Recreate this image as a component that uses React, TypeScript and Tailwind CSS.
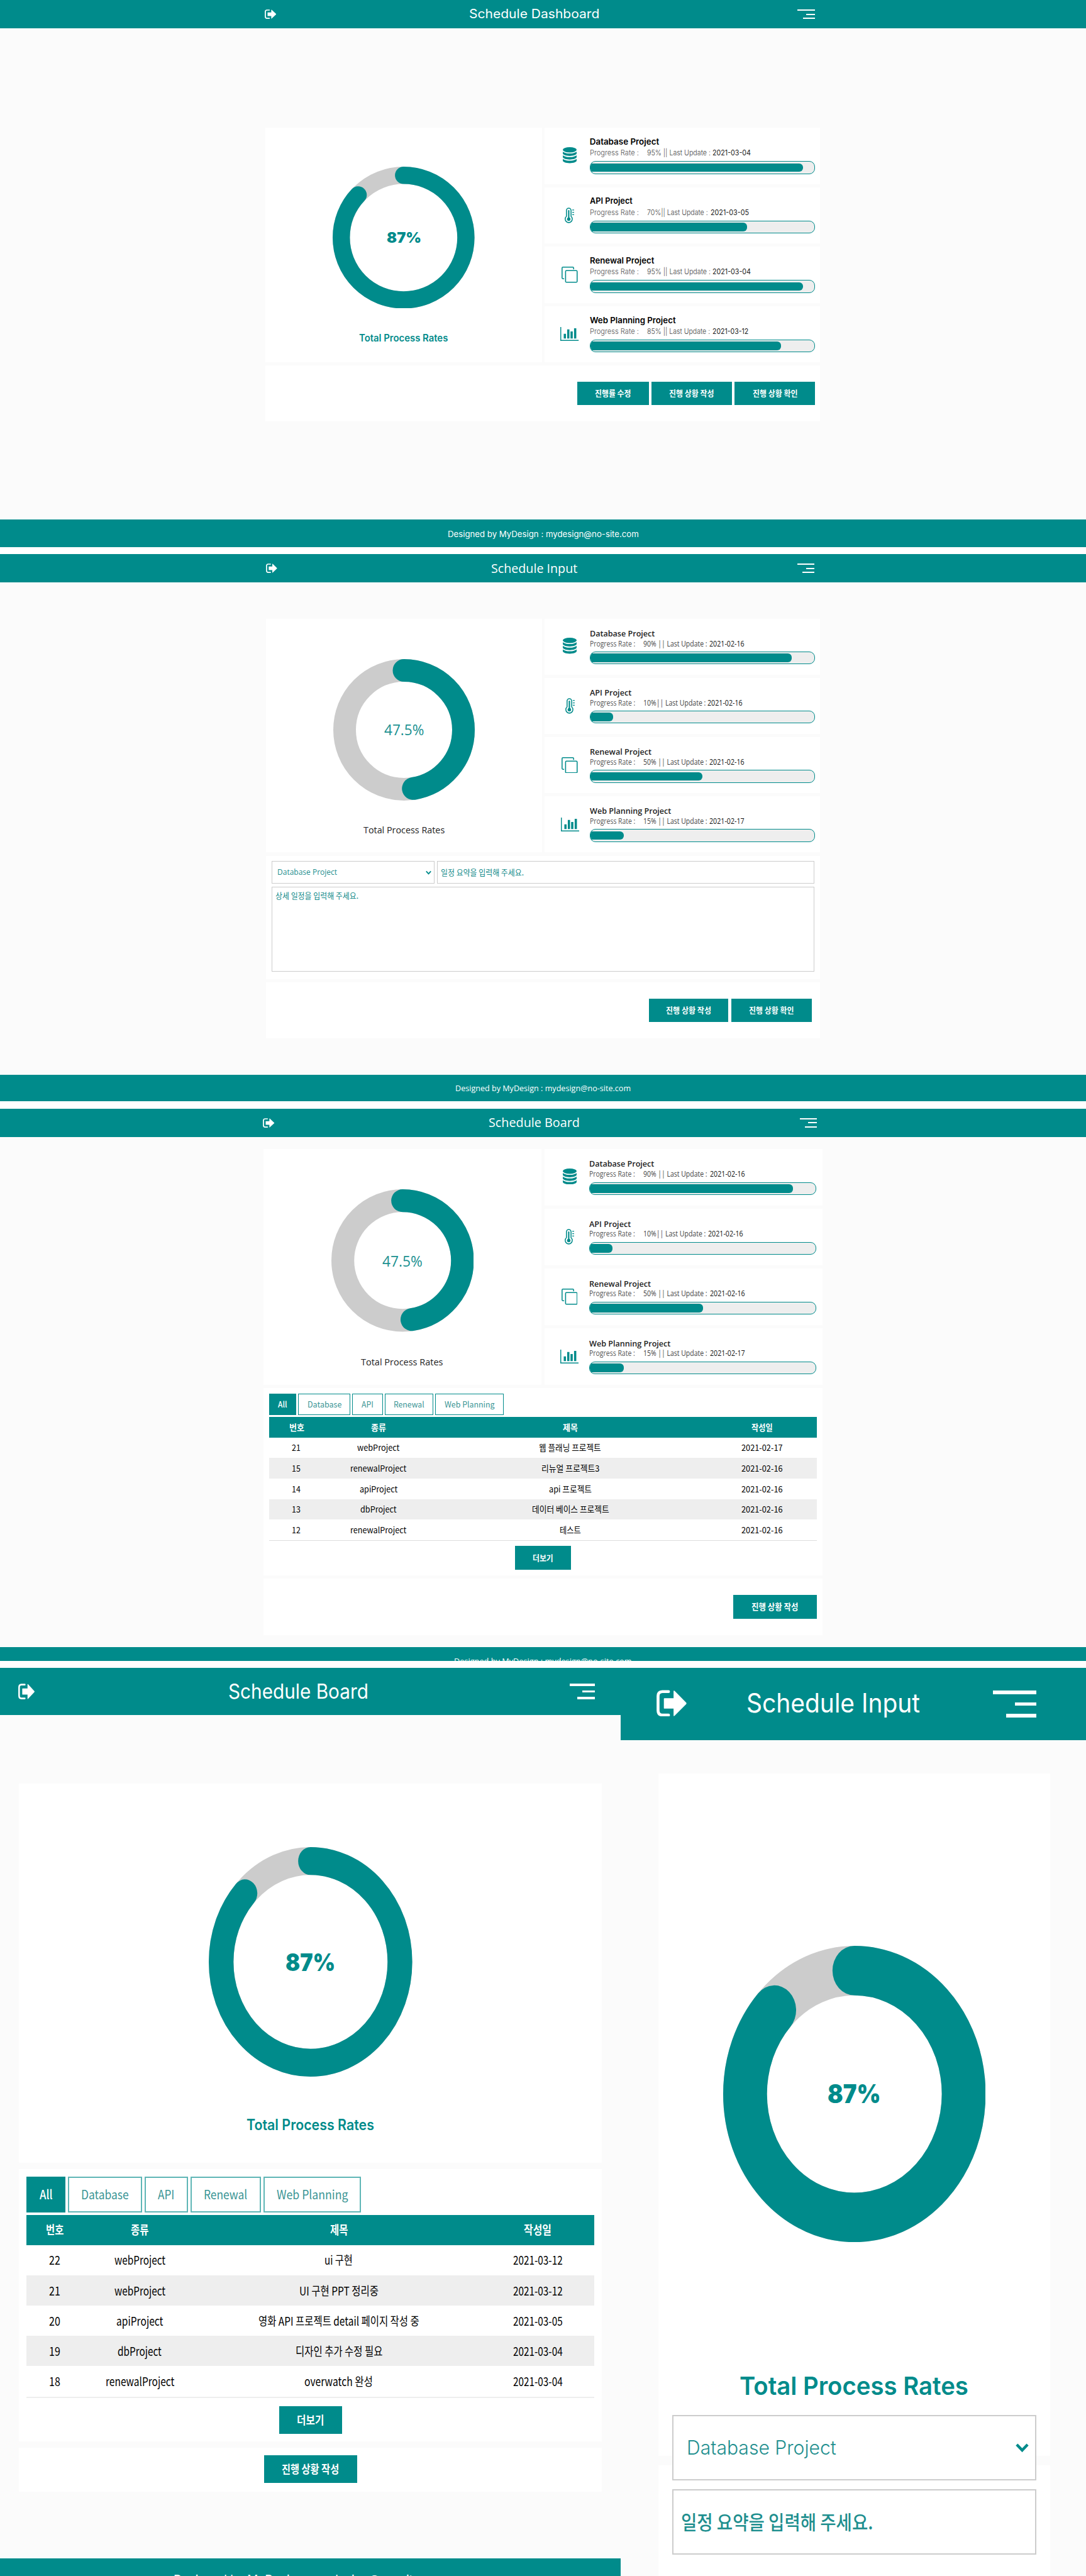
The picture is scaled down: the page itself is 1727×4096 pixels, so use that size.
import { useLayoutEffect, useRef, useState, type ReactNode } from "react";

const FONTS = {
  inter: { cls: "font-['Inter','Noto_Sans_CJK_KR',sans-serif]", shift: -0.01 },
  open: { cls: "font-['Open_Sans','Noto_Sans_CJK_KR',sans-serif]", shift: -0.01 },
  noto: { cls: "font-['Noto_Sans_CJK_KR',sans-serif]", shift: -0.03 },
};
type FontKey = keyof typeof FONTS;

/** A single line of text condensed or widened to an exact width. */
function Fit({ w, font, className = "", children }: { w: number; font: FontKey; className?: string; children: string }) {
  const ref = useRef<HTMLSpanElement>(null);
  const [scale, setScale] = useState(1);
  useLayoutEffect(() => {
    if (ref.current) setScale(w / ref.current.offsetWidth);
  }, [w, children]);
  return (
    <span className="flex shrink-0 items-center" style={{ width: w }}>
      <span
        ref={ref}
        className={`inline-block shrink-0 origin-left whitespace-pre leading-none ${FONTS[font].cls} ${className}`}
        style={{ transform: `translateY(${FONTS[font].shift}em) scaleX(${scale})` }}
      >
        {children}
      </span>
    </span>
  );
}

function SignOutIcon({ className }: { className: string }) {
  return (
    <svg viewBox="0 0 155 138" preserveAspectRatio="none" className={`shrink-0 text-white ${className}`}>
      <path d="M62 9H30Q8 10 8 32V106Q8 129 30 130H62" fill="none" stroke="currentColor" strokeWidth="15" strokeLinecap="round" />
      <path d="M38 46Q38 43 41 43H88V7Q88 2 93 5L153 66Q156 70 153 74L93 134Q88 138 88 132V97H41Q38 97 38 94Z" fill="currentColor" />
    </svg>
  );
}

function Burger({ className, bar }: { className: string; bar: string }) {
  return (
    <div className={`flex shrink-0 flex-col items-end justify-between ${className}`}>
      <i className={`w-full bg-white ${bar}`} />
      <i className={`w-1/2 bg-white ${bar}`} />
      <i className={`w-[70%] bg-white ${bar}`} />
    </div>
  );
}

function Donut({ value, stroke, className, children }: { value: number; stroke: number; className: string; children: ReactNode }) {
  const r = 50 - stroke / 2;
  return (
    <div className={`grid shrink-0 place-items-center ${className}`}>
      <svg viewBox="0 0 100 100" preserveAspectRatio="none" className="col-start-1 row-start-1 h-full w-full">
        <circle cx="50" cy="50" r={r} fill="none" stroke="#ccc" strokeWidth={stroke} />
        <circle
          cx="50"
          cy="50"
          r={r}
          fill="none"
          stroke="#008b8b"
          strokeWidth={stroke}
          strokeLinecap="round"
          pathLength={100}
          strokeDasharray={`${value} 100`}
          transform="rotate(-90 50 50)"
        />
      </svg>
      <div className="col-start-1 row-start-1">{children}</div>
    </div>
  );
}

function DatabaseIcon() {
  const band = "M12 12c4.8 0 10-1.2 12-3.4v3.4c0 2.2-5.4 4.2-12 4.2S0 14.2 0 12V8.6C2 10.8 7.2 12 12 12z";
  return (
    <svg viewBox="0 0 24 28" className="-mt-[2px] h-[25.6px] w-[22px] fill-[#008b8b]">
      <ellipse cx="12" cy="4.6" rx="12" ry="4.6" />
      <path d={band} transform="translate(0 -1)" />
      <path d={band} transform="translate(0 5.3)" />
      <path d={band} transform="translate(0 11.6)" />
    </svg>
  );
}
function ThermometerIcon() {
  return (
    <svg viewBox="0 0 49 82" className="h-[25px] w-[15px]" fill="none" stroke="#008b8b">
      <path d="M9 46V15a12 12 0 0 1 24 0V46a18.4 18.4 0 1 1-24 0z" strokeWidth="5" />
      <path d="M21 17V60" strokeWidth="7" strokeLinecap="round" />
      <circle cx="21" cy="61" r="9" fill="#008b8b" stroke="none" />
      <path d="M39 13h10M39 25h10M39 37h10" strokeWidth="4" />
    </svg>
  );
}
function CloneIcon() {
  return (
    <svg viewBox="0 0 28 28" className="h-[25.6px] w-[25.6px]" fill="none" stroke="#008b8b" strokeWidth="1.7">
      <rect x="7" y="6.9" width="20.1" height="20.2" rx="1.5" />
      <path d="M4.5 21H2.4A1.5 1.5 0 0 1 .9 19.5V2.4A1.5 1.5 0 0 1 2.4.9H19.5A1.5 1.5 0 0 1 21 2.4V4.6" />
    </svg>
  );
}
function BarChartIcon() {
  return (
    <svg viewBox="0 0 32 24" className="h-[22px] w-[29.2px]">
      <path d="M.8 0V23.2H32" fill="none" stroke="#008b8b" strokeWidth="1.6" />
      <path d="M6 11.7h3.9V20H6zM12 4h3.9v16H12zM17.8 7.7h3.9V20h-3.9zM24 2h3.9v18H24z" fill="#008b8b" />
    </svg>
  );
}
const ICONS = [<DatabaseIcon />, <ThermometerIcon />, <CloneIcon />, <BarChartIcon />];
const NAMES = ["Database Project", "API Project", "Renewal Project", "Web Planning Project"];

interface Project {
  nameW: number;
  rate: number;
  info: string;
  infoW: number;
  date: string;
  dateW: number;
}

function ProjectCard({ index, p, font, rateW, dateGap, title, meta, bar, body }: {
  index: number;
  p: Project;
  font: FontKey;
  rateW: number;
  dateGap: string;
  title: string;
  meta: string;
  bar: string;
  body: string;
}) {
  const size = font === "inter" ? "text-[12px] font-light" : "text-[12px] font-normal";
  const name = font === "inter" ? "text-[13.4px] font-semibold text-black" : "text-[13.2px] font-semibold text-[#222]";
  const date = font === "inter" ? "text-[12px] font-normal text-[#222]" : "text-[12px] font-normal text-[#111]";
  return (
    <div className="flex flex-1 bg-white">
      <div className="flex w-[71.8px] shrink-0 items-center justify-center pl-[8.2px]">{ICONS[index]}</div>
      <div className={`flex min-w-0 flex-1 flex-col ${body}`}>
        <div className={`flex shrink-0 items-center ${title}`}>
          <Fit w={p.nameW} font={font} className={name}>{NAMES[index]}</Fit>
        </div>
        <div className={`flex shrink-0 items-center ${meta}`}>
          <Fit w={rateW} font={font} className={`${size} text-[#555]`}>Progress Rate :</Fit>
          <span className="w-[13.5px]" />
          <Fit w={p.infoW} font={font} className={`${size} text-[#444]`}>{p.info}</Fit>
          <span className={dateGap} />
          <Fit w={p.dateW} font={font} className={date}>{p.date}</Fit>
        </div>
        <div className={`flex shrink-0 items-center overflow-hidden rounded-[9px] border border-[#008b8b] bg-[#eee] ${bar}`}>
          <div className="h-[13.6px] rounded-r-[6px] bg-[#008b8b]" style={{ width: `${p.rate}%` }} />
        </div>
      </div>
    </div>
  );
}

const dashboardProjects: Project[] = [
  { nameW: 110, rate: 95, info: "95% || Last Update :", infoW: 100.6, date: "2021-03-04", dateW: 60.6 },
  { nameW: 67.6, rate: 70, info: "70%|| Last Update :", infoW: 97, date: "2021-03-05", dateW: 61 },
  { nameW: 102.4, rate: 95, info: "95% || Last Update :", infoW: 100.6, date: "2021-03-04", dateW: 60.6 },
  { nameW: 136.5, rate: 85, info: "85% || Last Update :", infoW: 100.6, date: "2021-03-12", dateW: 57 },
];
const februaryProjects: Project[] = [
  { nameW: 102.9, rate: 90, info: "90% || Last Update :", infoW: 102, date: "2021-02-16", dateW: 56 },
  { nameW: 66, rate: 10, info: "10%|| Last Update :", infoW: 99, date: "2021-02-16", dateW: 56 },
  { nameW: 97.6, rate: 50, info: "50% || Last Update :", infoW: 102, date: "2021-02-16", dateW: 56 },
  { nameW: 129.7, rate: 15, info: "15% || Last Update :", infoW: 102, date: "2021-02-17", dateW: 56 },
];

function Button({ w, text, className }: { w: number; text: string; className: string }) {
  return (
    <button className={`flex shrink-0 items-center justify-center bg-[#008b8b] text-white ${className}`}>
      <Fit w={w} font="noto" className="font-bold">{text}</Fit>
    </button>
  );
}

function Chevron({ className }: { className: string }) {
  return (
    <svg viewBox="0 0 22 16" className={className} fill="none" stroke="#008b8b" strokeWidth="4.6">
      <path d="M2 3l9 9.5L20 3" />
    </svg>
  );
}

interface Row {
  cells: [string, string, string, string];
  w: [number, number, number, number];
}
const HEAD = ["번호", "종류", "제목", "작성일"];

function Board({ rows, headW, head, row, text, line }: { rows: Row[]; headW: number[]; head: string; row: string; text: string; line: string }) {
  const cols = "grid grid-cols-[10%_20%_50%_20%] items-center justify-items-center";
  return (
    <div className={line}>
      <div className={`${cols} bg-[#008b8b] ${head}`}>
        {HEAD.map((h, i) => (
          <Fit key={h} w={headW[i]} font="noto" className={`font-bold text-white ${text}`}>{h}</Fit>
        ))}
      </div>
      {rows.map((r) => (
        <div key={r.cells[0]} className={`${cols} odd:bg-[#eee] ${row}`}>
          {r.cells.map((c, i) => (
            <Fit key={i} w={r.w[i]} font="noto" className={`text-black ${text}`}>{c}</Fit>
          ))}
        </div>
      ))}
    </div>
  );
}

const wideRows: Row[] = [
  { cells: ["21", "webProject", "웹 플래닝 프로젝트", "2021-02-17"], w: [14, 67, 98.8, 65.3] },
  { cells: ["15", "renewalProject", "리뉴얼 프로젝트3", "2021-02-16"], w: [14, 89.4, 92.4, 65.3] },
  { cells: ["14", "apiProject", "api 프로젝트", "2021-02-16"], w: [14, 60.6, 67.7, 65.3] },
  { cells: ["13", "dbProject", "데이터 베이스 프로젝트", "2021-02-16"], w: [14, 58, 122.4, 65.3] },
  { cells: ["12", "renewalProject", "테스트", "2021-02-16"], w: [14, 89.4, 34, 65.3] },
];
const tabletRows: Row[] = [
  { cells: ["22", "webProject", "ui 구현", "2021-03-12"], w: [17.7, 81.5, 44.9, 79] },
  { cells: ["21", "webProject", "UI 구현 PPT 정리중", "2021-03-12"], w: [17.7, 81.5, 125.8, 79] },
  { cells: ["20", "apiProject", "영화 API 프로젝트 detail 페이지 작성 중", "2021-03-05"], w: [17.7, 74.6, 256, 79] },
  { cells: ["19", "dbProject", "디자인 추가 수정 필요", "2021-03-04"], w: [17.7, 70.2, 138.4, 79] },
  { cells: ["18", "renewalProject", "overwatch 완성", "2021-03-04"], w: [17.7, 109.3, 108.7, 79] },
];

function Tab({ w, text, active, className }: { w: number; text: string; active?: boolean; className: string }) {
  return (
    <button className={`flex shrink-0 items-center justify-center ${active ? "border-[#008b8b] bg-[#008b8b]" : "bg-white"} ${className}`}>
      <Fit w={w} font="noto" className={active ? "font-medium text-white" : "font-normal text-[#3a9595]"}>{text}</Fit>
    </button>
  );
}

const CREDIT = "Designed by MyDesign : mydesign@no-site.com";

function DashboardPage() {
  return (
    <section className="flex h-[870.4px] shrink-0 flex-col bg-[#fbfbfb]">
      <header className="flex h-[45.4px] shrink-0 items-center bg-[#008b8b] pb-[1.4px] pl-[421px] text-white">
        <SignOutIcon className="h-[15px] w-[18.3px]" />
        <span className="w-[306.7px]" />
        <Fit w={207.2} font="inter" className="text-[20px]">Schedule Dashboard</Fit>
        <span className="w-[315.2px]" />
        <Burger className="mt-[1px] h-[15.6px] w-[27.6px]" bar="h-[2px]" />
      </header>
      <main className="ml-[421.9px] flex w-[882.3px] flex-1 flex-col pt-[157.6px]">
        <div className="flex h-[373.3px] gap-[4.1px]">
          <div className="flex w-[440px] flex-col items-center bg-white pt-[61.9px]">
            <Donut value={87} stroke={12.15} className="h-[225.6px] w-[225.6px]">
              <Fit w={54.7} font="inter" className="text-[23.5px] font-black text-[#008b8b]">87%</Fit>
            </Donut>
            <div className="mt-[37.4px] flex h-5 items-center">
              <Fit w={141.2} font="inter" className="text-[15.4px] font-semibold text-[#008b8b]">Total Process Rates</Fit>
            </div>
          </div>
          <div className="flex flex-1 flex-col gap-[4.9px]">
            {dashboardProjects.map((p, i) => (
              <ProjectCard key={i} index={i} p={p} font="inter" rateW={77.7} dateGap="w-[3.6px]" body="pt-[13.6px]" title="h-[18px]" meta="h-[17.6px]" bar="mt-[3.8px] h-[20.7px] w-[358.2px]" />
            ))}
          </div>
        </div>
        <div className="mt-[4.4px] flex h-[89.8px] items-center justify-end gap-[4.5px] bg-white pr-[8.2px] text-[12.6px]">
          <Button w={57.7} text="진행률 수정" className="h-[37.2px] w-[114.1px]" />
          <Button w={71.2} text="진행 상황 작성" className="h-[37.2px] w-[127.7px]" />
          <Button w={71.2} text="진행 상황 확인" className="h-[37.2px] w-[127.7px]" />
        </div>
      </main>
      <footer className="flex h-[44.1px] shrink-0 items-center justify-center bg-[#008b8b] pt-[1.4px] text-white">
        <Fit w={304} font="inter" className="text-[13px]">{CREDIT}</Fit>
      </footer>
    </section>
  );
}

function InputPage() {
  return (
    <section className="mt-[11px] flex h-[869.8px] shrink-0 flex-col bg-[#fbfbfb]">
      <header className="flex h-[44.9px] shrink-0 items-center bg-[#008b8b] pl-[422.9px] text-white">
        <SignOutIcon className="h-[15px] w-[17.7px]" />
        <span className="w-[340.7px]" />
        <Fit w={137.7} font="open" className="text-[20px]">Schedule Input</Fit>
        <span className="w-[349.4px]" />
        <Burger className="h-[15.2px] w-[27px]" bar="h-[2px]" />
      </header>
      <main className="ml-[422.9px] flex w-[881.3px] flex-1 flex-col pt-[57.3px]">
        <div className="flex h-[371.6px] gap-[4.3px]">
          <div className="flex w-[439px] flex-col items-center bg-white pt-[64px]">
            <Donut value={47.5} stroke={16} className="h-[225px] w-[225px]">
              <Fit w={63} font="open" className="text-[24px] font-normal text-[#1b9191]">47.5%</Fit>
            </Donut>
            <div className="mt-[36.6px] flex h-5 items-center">
              <Fit w={129.4} font="open" className="text-[15.2px] text-[#222]">Total Process Rates</Fit>
            </div>
          </div>
          <div className="flex flex-1 flex-col gap-[4.9px]">
            {februaryProjects.map((p, i) => (
              <ProjectCard key={i} index={i} p={p} font="open" rateW={71.8} dateGap="w-[3px]" body="pt-[15.6px]" title="h-[17px]" meta="h-[15px]" bar="mt-[4.9px] h-[20.2px] w-[357.6px]" />
            ))}
          </div>
        </div>
        <div className="mt-[5.4px] flex h-[196.3px] flex-col gap-[5.2px] bg-white pt-[8.5px] pl-[9px]">
          <div className="flex gap-[4.7px]">
            <div className="flex h-[35.9px] w-[258.8px] items-center justify-between border border-[#ccc] pr-[3.7px] pl-[8px]">
              <Fit w={95.3} font="open" className="text-[12.6px] text-[#1f8f8f]">Database Project</Fit>
              <Chevron className="h-[7px] w-[9px]" />
            </div>
            <div className="flex h-[35.9px] w-[599.5px] items-center border border-[#ccc] pl-[5px]">
              <Fit w={132.4} font="noto" className="text-[12.8px] text-[#0f8a8a]">일정 요약을 입력해 주세요.</Fit>
            </div>
          </div>
          <div className="flex h-[134.7px] w-[863px] items-start border border-[#ccc] pt-[7px] pl-[5px]">
            <Fit w={132.4} font="noto" className="text-[12.8px] text-[#0f8a8a]">상세 일정을 입력해 주세요.</Fit>
          </div>
        </div>
        <div className="mt-[5.2px] flex h-[88.8px] items-center justify-end gap-[4.7px] bg-white pr-[13.4px] text-[12.6px]">
          <Button w={71.8} text="진행 상황 작성" className="h-[37.2px] w-[126.5px]" />
          <Button w={71.2} text="진행 상황 확인" className="h-[37.2px] w-[127.7px]" />
        </div>
      </main>
      <footer className="flex h-[42.7px] shrink-0 items-center justify-center bg-[#008b8b] pt-[1.6px] text-white">
        <Fit w={279.4} font="open" className="text-[12.8px]">{CREDIT}</Fit>
      </footer>
    </section>
  );
}

function BoardPage() {
  const tab = "h-[34.1px] border border-[#008b8b] text-[13px]";
  return (
    <section className="mt-[11.4px] flex h-[878.6px] shrink-0 flex-col overflow-hidden bg-[#fbfbfb]">
      <header className="flex h-[45px] shrink-0 items-center bg-[#008b8b] pl-[418.3px] text-white">
        <SignOutIcon className="h-[15px] w-[18.3px]" />
        <span className="w-[340px]" />
        <Fit w={145.3} font="open" className="text-[20px]">Schedule Board</Fit>
        <span className="w-[350px]" />
        <Burger className="h-[15px] w-[27px]" bar="h-[2px]" />
      </header>
      <main className="ml-[418.9px] flex w-[888.9px] flex-1 flex-col pt-[19px]">
        <div className="flex h-[375.4px] gap-[5px]">
          <div className="flex w-[441.8px] flex-col items-center bg-white pt-[64.8px]">
            <Donut value={47.5} stroke={16} className="h-[226.5px] w-[226.5px]">
              <Fit w={63.5} font="open" className="text-[24px] font-normal text-[#1b9191]">47.5%</Fit>
            </Donut>
            <div className="mt-[37.5px] flex h-5 items-center">
              <Fit w={130.6} font="open" className="text-[15.2px] text-[#222]">Total Process Rates</Fit>
            </div>
          </div>
          <div className="flex flex-1 flex-col gap-[5px]">
            {februaryProjects.map((p, i) => (
              <ProjectCard key={i} index={i} p={p} font="open" rateW={72.4} dateGap="w-[3.6px]" body="pt-[16px]" title="h-[17px]" meta="h-[15px]" bar="mt-[5.2px] h-[20.3px] w-[360.8px]" />
            ))}
          </div>
        </div>
        <div className="mt-[5.4px] flex h-[297.8px] flex-col bg-white px-[8.8px] pt-[8.5px]">
          <div className="flex gap-[3.4px]">
            <Tab active w={14.7} text="All" className={`w-[43px] ${tab}`} />
            <Tab w={54} text="Database" className={`w-[83px] ${tab}`} />
            <Tab w={18.8} text="API" className={`w-[48.2px] ${tab}`} />
            <Tab w={48.8} text="Renewal" className={`w-[77px] ${tab}`} />
            <Tab w={80} text="Web Planning" className={`w-[108.2px] ${tab}`} />
          </div>
          <div className="mt-[3.1px]">
            <Board rows={wideRows} headW={[23.5, 23.5, 23.5, 34]} head="h-[32.6px]" row="h-[32.65px]" text="text-[13.3px]" line="border-b-[1.5px] border-[#ddd]" />
          </div>
          <div className="mt-[8.6px] flex justify-center text-[12.6px]">
            <Button w={33} text="더보기" className="h-[37.2px] w-[89.4px]" />
          </div>
        </div>
        <div className="mt-[4.8px] flex h-[90.1px] items-center justify-end bg-white pr-[8.8px] text-[13.2px]">
          <Button w={74.7} text="진행 상황 작성" className="h-[38.3px] w-[133px]" />
        </div>
      </main>
      <footer className="flex h-[22.5px] shrink-0 items-start justify-center overflow-hidden bg-[#008b8b] pt-[16px] text-white">
        <Fit w={282.4} font="open" className="text-[13px]">{CREDIT}</Fit>
      </footer>
    </section>
  );
}

function TabletBoard() {
  const tab = "h-[57px] border-2 border-[#5fb6b6] text-[20px]";
  return (
    <section className="flex w-[987.3px] shrink-0 flex-col overflow-hidden bg-[#fbfbfb]">
      <header className="flex h-[74.9px] shrink-0 items-center bg-[#008b8b] pl-[29.1px] text-white">
        <SignOutIcon className="h-[25px] w-[26px]" />
        <span className="w-[308.4px]" />
        <Fit w={223} font="inter" className="text-[32px]">Schedule Board</Fit>
        <span className="w-[319.9px]" />
        <Burger className="h-[24.4px] w-[39.8px]" bar="h-[3.6px]" />
      </header>
      <main className="ml-[30.3px] flex w-[927.2px] flex-1 flex-col pt-[109.2px]">
        <div className="flex h-[603.2px] shrink-0 flex-col items-center bg-white pt-[100.6px]">
          <Donut value={87} stroke={12.15} className="h-[365px] w-[323.6px]">
            <Fit w={79} font="inter" className="text-[39px] font-black text-[#008b8b]">87%</Fit>
          </Donut>
          <div className="mt-[61.9px] flex h-[30px] items-center">
            <Fit w={203} font="inter" className="text-[24px] font-semibold text-[#008b8b]">Total Process Rates</Fit>
          </div>
        </div>
        <div className="mt-[9.2px] flex h-[433.7px] shrink-0 flex-col bg-white pt-[12.7px] pr-[12px] pl-[11.4px]">
          <div className="flex gap-[3.9px]">
            <Tab active w={20.2} text="All" className={`w-[62.6px] ${tab}`} />
            <Tab w={75.8} text="Database" className={`w-[118.2px] ${tab}`} />
            <Tab w={26.5} text="API" className={`w-[68.9px] ${tab}`} />
            <Tab w={69.5} text="Renewal" className={`w-[111.9px] ${tab}`} />
            <Tab w={113} text="Web Planning" className={`w-[155.5px] ${tab}`} />
          </div>
          <div className="mt-[3.3px]">
            <Board rows={tabletRows} headW={[28.4, 28.4, 28.4, 43.6]} head="h-[48.3px]" row="h-[48.15px]" text="text-[19px]" line="border-b-[2.4px] border-[#eee]" />
          </div>
          <div className="mt-[13.4px] flex justify-center text-[18px]">
            <Button w={43.6} text="더보기" className="h-[43.5px] w-[99.9px]" />
          </div>
        </div>
        <div className="mt-[10.1px] flex h-[69.3px] shrink-0 justify-center bg-white pt-[12px] text-[18.5px]">
          <Button w={91.6} text="진행 상황 작성" className="h-[43.6px] w-[148.5px]" />
        </div>
      </main>
      <footer className="flex h-[27.8px] shrink-0 items-start justify-center overflow-hidden bg-[#008b8b] pt-[24px] text-white">
        <Fit w={436} font="inter" className="text-[21px]">{CREDIT}</Fit>
      </footer>
    </section>
  );
}

function PhoneInput() {
  return (
    <section className="flex flex-1 flex-col overflow-hidden bg-[#fbfbfb]">
      <header className="flex h-[115.1px] shrink-0 items-center bg-[#008b8b] pb-[3.6px] pl-[56.6px] text-white">
        <SignOutIcon className="h-[42.5px] w-[47.8px]" />
        <span className="w-[94.9px]" />
        <Fit w={276.4} font="inter" className="text-[42px]">Schedule Input</Fit>
        <span className="w-[115.7px]" />
        <Burger className="mt-[3px] h-[43px] w-[69.8px]" bar="h-[5.6px]" />
      </header>
      <main className="ml-[59.3px] flex w-[623.8px] flex-1 flex-col pt-[52.9px]">
        <div className="flex h-[1084.5px] shrink-0 flex-col items-center bg-white pt-[273.7px]">
          <Donut value={87} stroke={16.7} className="h-[471.2px] w-[417.4px]">
            <Fit w={84.6} font="inter" className="text-[41px] font-black text-[#008b8b]">87%</Fit>
          </Donut>
          <div className="mt-[203.5px] flex h-[50px] items-center">
            <Fit w={364} font="inter" className="text-[40px] font-semibold text-[#008b8b]">Total Process Rates</Fit>
          </div>
        </div>
        <div className="mt-[15px] flex flex-1 flex-col items-start bg-white pl-[22.4px]">
          <div className="-mt-[79.9px] flex h-[104.3px] w-[579px] shrink-0 items-center justify-between border-[2.4px] border-[#ccc] bg-white pr-[10px] pl-[21.5px]">
            <Fit w={238} font="inter" className="text-[31px] font-light text-[#1f8f8f]">Database Project</Fit>
            <Chevron className="h-[15.5px] w-[21px]" />
          </div>
          <div className="mt-[13.6px] flex h-[104.2px] w-[579px] shrink-0 items-center border-[2.4px] border-[#ccc] bg-white pl-[12.5px]">
            <Fit w={305.6} font="noto" className="text-[31px] font-medium text-[#1f8f8f]">일정 요약을 입력해 주세요.</Fit>
          </div>
        </div>
      </main>
    </section>
  );
}

export default function App() {
  return (
    <div className="flex h-[4096px] w-[1727px] flex-col overflow-hidden bg-white">
      <DashboardPage />
      <InputPage />
      <BoardPage />
      <div className="mt-[11px] flex h-[1443.8px] shrink-0">
        <TabletBoard />
        <PhoneInput />
      </div>
    </div>
  );
}
